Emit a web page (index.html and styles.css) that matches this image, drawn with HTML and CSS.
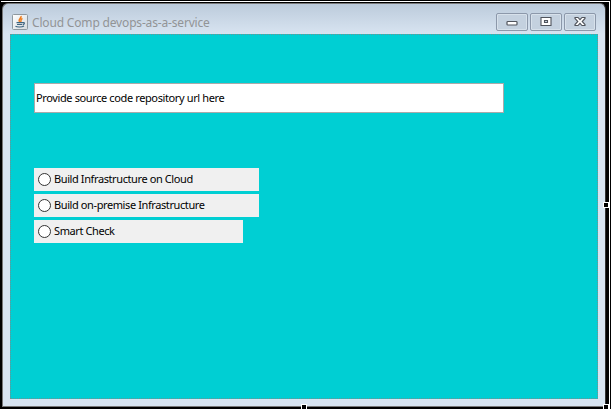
FILE: index.html
```
<!DOCTYPE html>
<html lang="en">
<head>
<meta charset="utf-8">
<title>Cloud Comp devops-as-a-service</title>
<link rel="stylesheet" href="styles.css">
</head>
<body>
<div class="frame">
<div class="window">
  <header class="titlebar">
    <svg class="logo" width="16" height="16" viewBox="0 0 16 16">
      <defs><linearGradient id="g" x2="1" y2="1"><stop offset="0" stop-color="#fff"/><stop offset="1" stop-color="#d5dade"/></linearGradient></defs>
      <rect x=".5" y=".5" width="15" height="15" rx="1" fill="url(#g)" stroke="#8e989f"/>
      <path d="M9 2C10 4 5.500 4.700 7.500 8M10.500 4.500C7.500 5.500 10 6.500 8.500 8" fill="none" stroke="#ef7d1e" stroke-width="1.500"/>
      <path d="M4.500 8.700H10.500M5 10.500H10M10.500 8.700C13 8 13 10.200 10.700 10.800M3.500 12.300C5 13.300 10 13.300 12 12" fill="none" stroke="#3f6580" stroke-width="1.200"/>
    </svg>
    <h1 class="title">Cloud Comp devops-as-a-service</h1>
    <div class="controls">
      <button class="control" aria-label="Minimize"><svg width="14" height="12"><rect x="2" y="5.500" width="10" height="3.500" rx=".8" fill="#fff" stroke="#50545c" stroke-width="1.200"/></svg></button>
      <button class="control" aria-label="Maximize"><svg width="14" height="12"><path fill-rule="evenodd" d="M2 1.500H12V9.500H2ZM5.500 4.500V6.500H8.500V4.500Z" fill="#fff" stroke="#50545c" stroke-width="1.100"/></svg></button>
      <button class="control" aria-label="Close"><svg width="14" height="12"><path d="M2 1.500H5L7 3.700L9 1.500H12V2.500L9.200 5.500L12 8.500V9.500H9L7 7.300L5 9.500H2V8.500L4.800 5.500L2 2.500Z" fill="#fff" stroke="#50545c" stroke-width="1.100"/></svg></button>
    </div>
  </header>
  <main class="content">
    <input class="url" type="text" value="Provide source code repository url here" aria-label="Repository url">
    <div class="options">
      <label class="option"><input type="radio" name="task"><span>Build Infrastructure on Cloud</span></label>
      <label class="option"><input type="radio" name="task"><span>Build on-premise Infrastructure</span></label>
      <label class="option short"><input type="radio" name="task"><span>Smart Check</span></label>
    </div>
  </main>
  <i class="handle right"></i><i class="handle bottom"></i><i class="handle corner"></i>
</div>
</div>
</body>
</html>
```
FILE: styles.css
```
* { box-sizing: border-box; }
body {
  margin: 0;
  height: 409px;
  padding: 1px 1px 0;
  overflow: hidden;
  background: #000;
}
.frame {
  height: 408px;
  padding: 1px 0 0 1px;
  border-top: 1px solid #fff;
  border-right: 1px solid #fff;
}
.window {
  position: relative;
  width: 604px;
  height: 404px;
  padding: 0 7px 7px;
  border: 1px solid #777;
  border-right-color: #333;
  border-radius: 6px 6px 0 0;
  background: linear-gradient(#bccbdb, #d8e4f1 30px);
}
.titlebar { display: flex; height: 30px; padding-left: 2px; }
.logo { margin-top: 10px; }
.title {
  margin: 10px 0 0 4px;
  font: 12px/18px "Noto Sans", sans-serif;
  letter-spacing: -0.17px;
  color: #929496;
}
.controls { display: flex; gap: 2px; margin: 9px 2px 0 auto; }
.control {
  display: flex;
  align-items: center;
  justify-content: center;
  width: 32px;
  height: 18px;
  padding: 0;
  border: 1px solid #8c98aa;
  border-radius: 2px;
  background: #c4d1df;
  box-shadow: inset 0 0 0 1px #d7e1eb;
}
.content {
  height: 365px;
  padding: 48px 23px;
  border: 1px dotted #738f91;
  background: #00cfd3;
}
.url {
  display: block;
  width: 470px;
  height: 30px;
  padding: 0 1px 2px;
  border: 1px solid #aaa;
  background: #fff;
  font: 11px "Noto Sans", sans-serif;
  letter-spacing: -0.38px;
  color: #000;
}
.options { display: grid; gap: 3px; width: 225px; margin-top: 55px; }
.option {
  display: flex;
  align-items: center;
  height: 23px;
  padding-left: 4px;
  background: #f0f0f0;
  font: 11px "Noto Sans", sans-serif;
  letter-spacing: -0.4px;
}
.option span { margin-top: -2px; }
.short { width: 209px; }
.option input {
  appearance: none;
  width: 13px;
  height: 13px;
  margin: 0 3px 0 0;
  border: 1px solid #333;
  border-radius: 50%;
  background: #fff;
}
.handle {
  position: absolute;
  width: 6px;
  height: 6px;
  border: 1px solid #fff;
  background: #000;
}
.right { left: 600px; top: 198px; }
.bottom { left: 298px; top: 400px; }
.corner { left: 600px; top: 400px; }
```
